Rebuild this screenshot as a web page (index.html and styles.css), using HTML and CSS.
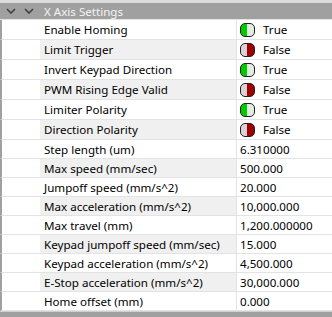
FILE: index.html
```html
<!DOCTYPE html>
<html lang="en">
<head>
    <meta charset="UTF-8">
    <title>X Axis Settings</title>
    <link rel="stylesheet" href="styles.css">
</head>
<body>
<div class="grid">
    <div class="category">
        <span class="chev"><svg width="10" height="6" viewBox="0 0 10 6"><path d="M1 1 L5 5 L9 1" fill="none" stroke="#404040" stroke-width="1.6"/></svg></span>
        <span class="chev"><svg width="10" height="6" viewBox="0 0 10 6"><path d="M1 1 L5 5 L9 1" fill="none" stroke="#404040" stroke-width="1.6"/></svg></span>
        <span class="cat-title">X Axis Settings</span>
    </div>

    <div class="row tall">
        <div class="name">Enable Homing</div>
        <div class="value"><span class="toggle on"></span>True</div>
    </div>
    <div class="row tall alt">
        <div class="name">Limit Trigger</div>
        <div class="value"><span class="toggle off"></span>False</div>
    </div>
    <div class="row tall">
        <div class="name">Invert Keypad Direction</div>
        <div class="value"><span class="toggle on"></span>True</div>
    </div>
    <div class="row tall alt">
        <div class="name">PWM Rising Edge Valid</div>
        <div class="value"><span class="toggle off"></span>False</div>
    </div>
    <div class="row tall">
        <div class="name">Limiter Polarity</div>
        <div class="value"><span class="toggle on"></span>True</div>
    </div>
    <div class="row tall alt">
        <div class="name">Direction Polarity</div>
        <div class="value"><span class="toggle off"></span>False</div>
    </div>
    <div class="row">
        <div class="name">Step length (um)</div>
        <div class="value">6.310000</div>
    </div>
    <div class="row alt">
        <div class="name">Max speed (mm/sec)</div>
        <div class="value">500.000</div>
    </div>
    <div class="row">
        <div class="name">Jumpoff speed (mm/s^2)</div>
        <div class="value">20.000</div>
    </div>
    <div class="row alt">
        <div class="name">Max acceleration (mm/s^2)</div>
        <div class="value">10,000.000</div>
    </div>
    <div class="row">
        <div class="name">Max travel (mm)</div>
        <div class="value">1,200.000000</div>
    </div>
    <div class="row alt">
        <div class="name">Keypad jumpoff speed (mm/sec)</div>
        <div class="value">15.000</div>
    </div>
    <div class="row">
        <div class="name">Keypad acceleration (mm/s^2)</div>
        <div class="value">4,500.000</div>
    </div>
    <div class="row alt">
        <div class="name">E-Stop acceleration (mm/s^2)</div>
        <div class="value">30,000.000</div>
    </div>
    <div class="row">
        <div class="name">Home offset (mm)</div>
        <div class="value">0.000</div>
    </div>
    <div class="footer"></div>
</div>
</body>
</html>
```

FILE: styles.css
```css
body {
    margin: 0;
    font-family: "Noto Sans", "Liberation Sans", sans-serif;
    font-size: 11.6px;
    color: #000;
    background: #fff;
}
.grid {
    width: 332px;
    height: 317px;
    overflow: hidden;
}
.category {
    display: flex;
    align-items: center;
    height: 16px;
    border-top: 3px solid #dcdcdc;
    background: #a0a0a0;
    color: #f4f4f4;
    padding-left: 6px;
    border-bottom: 1px solid #e4e4e4;
}
.chev {
    display: flex;
    width: 18px;
}
.cat-title {
    margin-left: 2px;
}
.row {
    display: flex;
    height: 18px;
    border-bottom: 1px solid #e3e3e3;
    border-left: 2px solid #a0a0a0;
    padding-left: 38px;
}
.row.tall {
    height: 19px;
}
.name {
    width: 192px;
    padding-left: 4px;
    display: flex;
    align-items: center;
    border-right: 1px solid #e3e3e3;
    white-space: nowrap;
}
.alt .name {
    background: #f0f0f0;
}
.value {
    display: flex;
    align-items: center;
    padding-left: 3px;
}
.toggle {
    box-sizing: border-box;
    width: 15px;
    height: 14px;
    border: 1px solid #202020;
    border-radius: 5px;
    margin-right: 8px;
}
.toggle.on {
    background: linear-gradient(to right, #00cc00 0, #00cc00 45%, #e4ece4 45%);
}
.toggle.off {
    background: linear-gradient(to right, #dcd4d4 0, #dcd4d4 50%, #a00000 50%);
}
.footer {
    height: 6px;
    border-top: 1px solid #d0d0d0;
    background: #a0a0a0;
}
```
